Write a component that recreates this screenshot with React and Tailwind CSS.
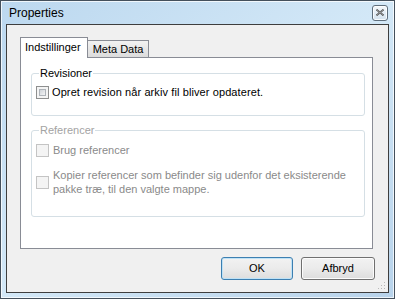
import React from "react";

function CheckBox({ disabled }) {
  return disabled ? (
    <div className="w-[13px] h-[13px] shrink-0 border border-[#c4c4c4] bg-[#f4f4f4]" />
  ) : (
    <div className="w-[13px] h-[13px] shrink-0 border border-[#8e8f8f] bg-[#f4f4f4] p-[2px]">
      <div className="w-full h-full border border-[#aeb3b9] bg-gradient-to-br from-[#cfd3d8] to-[#f3f4f5]" />
    </div>
  );
}

export default function App() {
  return (
    <div className="w-[395px] h-[299px] font-['Liberation_Sans',Arial,sans-serif] text-[11px] leading-[13px] text-black">
      <div className="w-full h-full flex flex-col border border-[#44505c] bg-gradient-to-br from-[#bcd8ef] via-[#d3e8f7] to-[#b8d3eb] shadow-[inset_0_0_0_1px_rgba(255,255,255,0.75)]">
        {/* Title bar */}
        <div className="h-[23px] flex items-center justify-between pl-[8px] pr-[6px]">
          <span className="text-[12px] leading-[14px] text-black">Properties</span>
          <div className="w-[16px] h-[16px] rounded-[3px] border border-[#5f6e7c] bg-gradient-to-b from-[#f4f8fb] to-[#d4e2ee] flex items-center justify-center shadow-[inset_0_0_0_1px_rgba(255,255,255,0.8)]">
            <svg width="8" height="7" viewBox="0 0 8 7">
              <path d="M0.5 0.5 L7.5 6.5 M7.5 0.5 L0.5 6.5" stroke="#3a3a3a" strokeWidth="1.6" />
              <path d="M0.5 0.5 L7.5 6.5 M7.5 0.5 L0.5 6.5" stroke="#ffffff" strokeWidth="0.5" />
            </svg>
          </div>
        </div>

        {/* Client area */}
        <div className="mx-[5px] h-[269px] border border-[#3e3e3e] bg-[#f0f0f0] flex flex-col pl-[13px] pr-[13px] pt-[12px] pb-[12px] relative">
          {/* Tab strip */}
          <div className="flex items-end h-[20px] mr-[2px]">
            <div className="relative z-10 h-[21px] -mb-px bg-white border border-b-0 border-[#898c95] pl-[4px] pr-[6px] pt-[3px]">
              Indstillinger
            </div>
            <div className="h-[17px] -ml-px border border-b-0 border-[#898c95] bg-gradient-to-b from-[#f2f2f2] to-[#dcdcdc] pl-[5px] pr-[5px] pt-[2px]">
              Meta Data
            </div>
          </div>

          {/* Tab page */}
          <div className="flex-1 mr-[2px] bg-white border border-[#898c95] pl-[10px] pr-[7px] pt-[9px]">
            <fieldset className="border border-[#d5dfe5] rounded-[3px] pl-[4px] pr-[4px] pt-[6px] pb-[16px]">
              <legend className="ml-[3px] px-[1px] text-black">Revisioner</legend>
              <div className="flex items-center gap-[3px]">
                <CheckBox />
                <span className="tracking-[0.1px]">Opret revision når arkiv fil bliver opdateret.</span>
              </div>
            </fieldset>

            <fieldset className="mt-[8px] border border-[#d5dfe5] rounded-[3px] pl-[4px] pr-[4px] pt-[7px] pb-[20px]">
              <legend className="ml-[3px] px-[1px] text-[#a3a3a3]">Referencer</legend>
              <div className="flex items-center gap-[4px] text-[#8a8a8a]">
                <CheckBox disabled />
                <span>Brug referencer</span>
              </div>
              <div className="mt-[11px] flex items-center gap-[4px] text-[#8a8a8a]">
                <CheckBox disabled />
                <span className="leading-[14px]">
                  Kopier referencer som befinder sig udenfor det eksisterende
                  <br />
                  pakke træ, til den valgte mappe.
                </span>
              </div>
            </fieldset>
          </div>

          {/* Buttons */}
          <div className="mt-[8px] flex justify-end gap-[8px]">
            <div className="w-[72px] h-[23px] rounded-[3px] border border-[#3c7fb1] bg-gradient-to-b from-[#f2f2f2] via-[#ebebeb] to-[#dddddd] shadow-[inset_0_0_0_1px_#bfe2f6] flex items-center justify-center">
              OK
            </div>
            <div className="w-[74px] h-[23px] rounded-[3px] border border-[#707070] bg-gradient-to-b from-[#f2f2f2] via-[#ebebeb] to-[#dddddd] shadow-[inset_0_0_0_1px_#fcfcfc] flex items-center justify-center">
              Afbryd
            </div>
          </div>

          {/* Size grip */}
          <svg className="absolute right-[2px] bottom-[2px]" width="8" height="8" viewBox="0 0 8 8">
            <rect x="6" y="0" width="1" height="1" fill="#b7b7b7" />
            <rect x="3" y="3" width="1" height="1" fill="#b7b7b7" />
            <rect x="6" y="3" width="1" height="1" fill="#b7b7b7" />
            <rect x="0" y="6" width="1" height="1" fill="#b7b7b7" />
            <rect x="3" y="6" width="1" height="1" fill="#b7b7b7" />
            <rect x="6" y="6" width="1" height="1" fill="#b7b7b7" />
          </svg>
        </div>
      </div>
    </div>
  );
}
